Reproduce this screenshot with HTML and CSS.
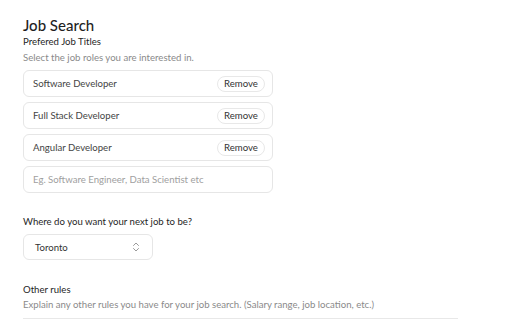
FILE: index.html
```html
<!DOCTYPE html>
<html lang="en">
<head>
    <meta charset="UTF-8">
    <title>Job Search</title>
    <link rel="stylesheet" href="styles.css">
</head>
<body>
    <div class="container">
        <h1>Job Search</h1>
        <section class="group">
            <h3>Prefered Job Titles</h3>
            <p class="hint">Select the job roles you are interested in.</p>
            <ul class="titles">
                <li class="title-row">
                    <span>Software Developer</span>
                    <button type="button">Remove</button>
                </li>
                <li class="title-row">
                    <span>Full Stack Developer</span>
                    <button type="button">Remove</button>
                </li>
                <li class="title-row">
                    <span>Angular Developer</span>
                    <button type="button">Remove</button>
                </li>
                <li>
                    <input type="text" class="title-input" placeholder="Eg. Software Engineer, Data Scientist etc">
                </li>
            </ul>
        </section>

        <section class="group location">
            <label for="city">Where do you want your next job to be?</label>
            <div class="select">
                <span>Toronto</span>
                <svg width="8" height="10" viewBox="0 0 8 10" fill="none" stroke="#9a9a9a" stroke-width="1" stroke-linecap="round" stroke-linejoin="round">
                    <path d="M1.5 3.5 L4 1 L6.5 3.5"/>
                    <path d="M1.5 6.5 L4 9 L6.5 6.5"/>
                </svg>
            </div>
        </section>

        <section class="group rules">
            <h3>Other rules</h3>
            <p class="hint">Explain any other rules you have for your job search. (Salary range, job location, etc.)</p>
            <div class="textarea"></div>
        </section>
    </div>
</body>
</html>
```

FILE: styles.css
```css
* {
    box-sizing: border-box;
}
body {
    margin: 0;
    background-color: #ffffff;
    font-family: "Lato", "Open Sans", sans-serif;
    color: #2b2b2b;
}
.container {
    padding: 16px 23px 0;
    width: 481px;
}
h1 {
    font-size: 15px;
    line-height: 18px;
    font-weight: 500;
    margin: 0 0 2px;
    color: #1f1f1f;
}
h3, label {
    display: block;
    font-size: 9.6px;
    line-height: 12px;
    font-weight: 400;
    margin: 0 0 4px;
    color: #1f1f1f;
}
.hint {
    font-size: 9.6px;
    line-height: 12px;
    color: #8a8a8a;
    margin: 0 0 6px;
}
.titles {
    list-style: none;
    margin: 0;
    padding: 0;
    width: 250px;
    display: flex;
    flex-direction: column;
    gap: 5px;
}
.title-row, .title-input {
    height: 27px;
    border: 1px solid #e6e6e6;
    border-radius: 6px;
    font-size: 9.6px;
}
.title-row {
    display: flex;
    align-items: center;
    justify-content: space-between;
    padding: 0 7px 0 9px;
    color: #444;
}
.title-row button {
    font-family: inherit;
    font-size: 9.6px;
    color: #333;
    background: #fff;
    border: 1px solid #e8e8e8;
    border-radius: 9px;
    height: 16px;
    width: 48px;
    padding: 0;
}
.title-input {
    width: 100%;
    padding: 0 9px;
    font-family: inherit;
    outline: none;
}
.title-input::placeholder {
    color: #a0a0a0;
}
.location {
    margin-top: 23px;
}
.location label {
    margin-bottom: 6px;
}
.select {
    width: 130px;
    height: 26px;
    border: 1px solid #e6e6e6;
    border-radius: 6px;
    display: flex;
    align-items: center;
    justify-content: space-between;
    padding: 0 12px 0 11px;
    font-size: 9.6px;
    color: #333;
}
.rules {
    margin-top: 24px;
}
.rules h3 {
    margin-bottom: 3px;
}
.textarea {
    border-top: 1px solid #e8e8e8;
    height: 20px;
    margin-top: 7px;
}
```
